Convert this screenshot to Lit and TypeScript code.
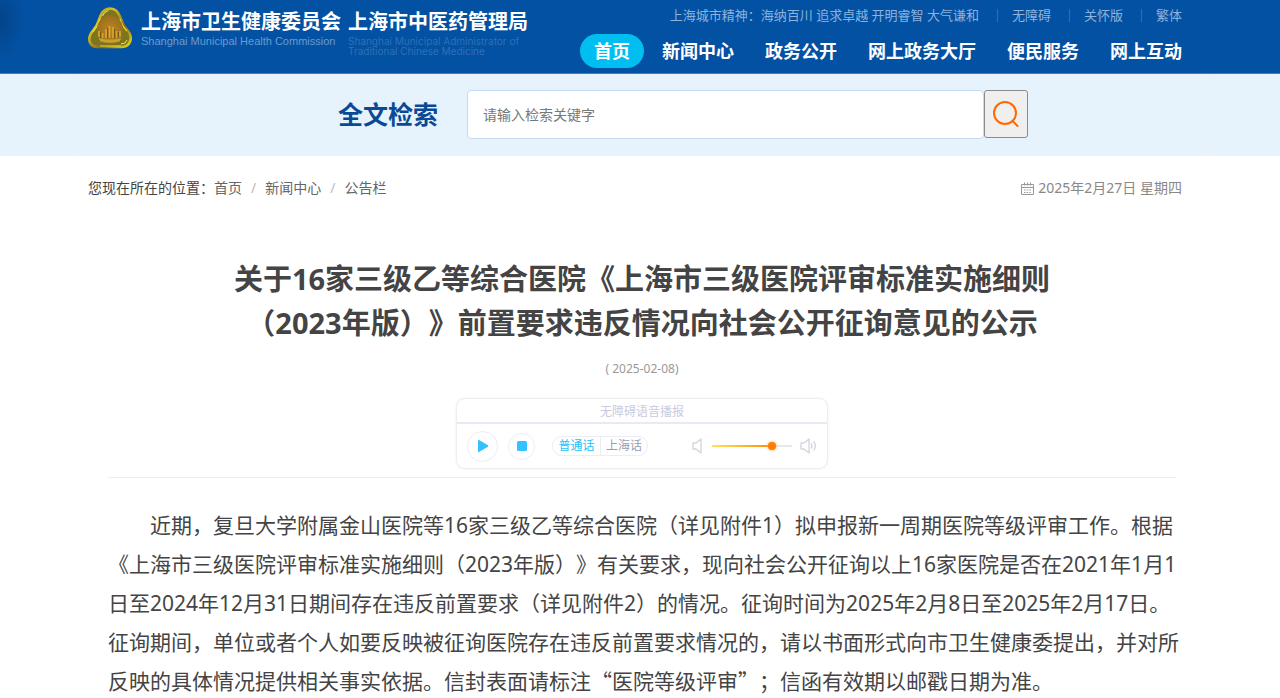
import { LitElement, html, css, svg } from "lit";
import { customElement, state } from "lit/decorators.js";

const NAV = ["首页", "新闻中心", "政务公开", "网上政务大厅", "便民服务", "网上互动"];
const TOOLS = ["无障碍", "关怀版", "繁体"];
const CRUMBS = ["首页", "新闻中心", "公告栏"];
const LINES = [
  "近期，复旦大学附属金山医院等16家三级乙等综合医院（详见附件1）拟申报新一周期医院等级评审工作。根据",
  "《上海市三级医院评审标准实施细则（2023年版）》有关要求，现向社会公开征询以上16家医院是否在2021年1月1",
  "日至2024年12月31日期间存在违反前置要求（详见附件2）的情况。征询时间为2025年2月8日至2025年2月17日。",
  "征询期间，单位或者个人如要反映被征询医院存在违反前置要求情况的，请以书面形式向市卫生健康委提出，并对所",
];

const emblem = svg`
  <svg class="emblem" viewBox="0 0 44 42" aria-hidden="true">
    <defs>
      <linearGradient id="rim" x1="0" y1="0" x2="1" y2="1">
        <stop offset="0" stop-color="#a8781c" /><stop offset=".3" stop-color="#d9c522" />
        <stop offset=".65" stop-color="#8f6a1a" /><stop offset="1" stop-color="#e6de1c" />
      </linearGradient>
      <radialGradient id="core"><stop offset="0" stop-color="#bd8420" /><stop offset="1" stop-color="#99701f" /></radialGradient>
    </defs>
    <path d="M22 1.500C26 1.500 29 3.500 31 7.500L34 14Q35 18 38.500 22C43 27 44 32 41 36.500C39 39.500 36 40 33 40H10C6 40 3 38.500 1.800 35C.500 31 2 27 5 23.500Q9 19 10.500 14L13 7.500C15 3.500 18 1.500 22 1.500Z" fill="#7d7420" stroke="url(#rim)" stroke-width="2.600" />
    <path d="M12 12Q10 19 5 25M32 12q2 7 7 12M12 39h21" stroke="#e5dd22" stroke-width="1.200" fill="none" />
    <ellipse cx="22" cy="22.500" rx="13" ry="14" fill="url(#core)" />
    <path d="M11 24v6M14.500 26v5M18 22v9M21.500 19v12M25 20v11M28.500 24v7M32 24v6" stroke="#d8ab2c" stroke-width="1.600" />
    <path d="M12.700 25v6M19.700 21v10M26.700 22v9M30.300 25v5" stroke="#74501a" stroke-width="1" />
    <path d="M10.500 31q11.500 3 23 0l-2 3.500q-9.500 2.500-19 0Z" fill="#c9a126" />
    <path d="M14.500 9q2-5 6-5.500M33 37q5 0 6-4" stroke="#efe84a" stroke-width="1" fill="none" />
  </svg>`;

@customElement("app-root")
export class AppRoot extends LitElement {
  @state() private dialect = "普通话";

  static styles = css`
    :host { display: block; min-height: 100vh; overflow: hidden; background: #fff; color: #444;
      font-family: "Noto Sans", "Noto Sans CJK SC", sans-serif; text-spacing-trim: space-all; }
    * { box-sizing: border-box; }
    a { color: inherit; text-decoration: none; }
    button { font: inherit; padding: 0; cursor: pointer; }
    .wrap { padding: 0 98px 0 88px; }
    header { background: radial-gradient(ellipse 24px 40px at 0 20px, #034488, #0351a3); border-bottom: 1px solid #3d7dbd; color: #fff; }
    .top { display: flex; justify-content: space-between; height: 73px; }
    .brand { display: flex; padding-top: 7px; }
    .emblem { width: 44px; height: 42px; }
    .org { margin-left: 9px; white-space: nowrap; padding-top: 1px; }
    .org b { display: block; font-size: 20px; line-height: 26px; font-weight: 700; font-family: "Noto Sans CJK SC", sans-serif; }
    .org small { display: block; font: 11px/14px "Liberation Sans", sans-serif; color: #6b9bcc; }
    .org + .org { margin-left: 7px; }
    .org .dim { font: 10px/10px "Inter", sans-serif; color: #2f70b4; padding-top: 2px; }
    .right { display: flex; flex-direction: column; align-items: flex-end; }
    .tools { display: flex; align-items: center; height: 20px; margin-top: 5px; font-size: 13px; line-height: 20px; color: #8cb3dc; white-space: nowrap; }
    .tools a { margin-left: 18px; padding-left: 14px; border-left: 1px solid #2f70b4; line-height: 13px; }
    nav { display: flex; align-items: center; gap: 31px; margin-top: 9px; font-size: 18px; font-weight: 700; line-height: 34px; white-space: nowrap; }
    nav .on { background: #00bff0; border-radius: 17px; padding: 0 14px; margin-right: -13px; }
    .search { background: #e6f3fd; border-bottom: 1px solid #eef3f7; padding: 0 69px 0 73px; }
    .bar { display: flex; height: 81px; padding: 15px 0 0 264px; border: 1px solid #ebf1f5; border-width: 1px 1px 0; border-radius: 4px; }
    .search label { font-size: 25px; font-weight: 700; line-height: 49px; color: #0a4a94; width: 129px; }
    .search input { width: 517px; height: 49px; border: 1px solid #c4dbf3; border-radius: 4px; padding: 0 15px; font: inherit; font-size: 14px; background: #fff; }
    .search input::placeholder { color: #777; }
    .search button { width: 44px; height: 48px; border: 1px solid #8a8a8a; border-radius: 3px; background: #efefef; display: grid; place-items: center; }
    .crumbs { display: flex; justify-content: space-between; padding-top: 22px; font-size: 14px; line-height: 20px; color: #666; }
    .crumbs .here { color: #444; }
    .crumbs i { color: #bbb; font-style: normal; margin: 0 9px; }
    .date { display: flex; align-items: center; gap: 4px; color: #888; }
    article { padding: 0 104px 0 108px; }
    h1 { margin: 59px 0 0; font-size: 29px; line-height: 44px; text-align: center; color: #444; white-space: nowrap; }
    .pub { margin: 14px 0 0; text-align: center; font-size: 12px; line-height: 20px; color: #999; }
    .player { width: 370px; margin: 20px auto 0; border-radius: 8px; box-shadow: 0 0 3px #cfcfd6; }
    .caption { font-size: 12px; line-height: 25px; height: 25px; text-align: center; color: #c9cbe0; border-bottom: 2px solid #e8e9f3; }
    .controls { display: flex; align-items: center; height: 44px; padding: 0 10px; }
    .round { border: 1px solid #ececf5; border-radius: 50%; background: #fff; display: grid; place-items: center; width: 31px; height: 31px; }
    .round.stop { width: 27px; height: 27px; margin-left: 10px; }
    .dialects { display: flex; border: 1px solid #ececf5; border-radius: 10px; margin-left: 17px; height: 20px; }
    .dialects button { border: 0; background: none; color: #9a9db0; font-size: 12px; line-height: 18px; width: 47px; }
    .dialects button + button { border-left: 1px solid #ececf5; }
    .dialects .on { color: #1fc1f7; }
    .low { margin-left: auto; }
    .volume { appearance: none; width: 80px; height: 12px; margin: 0 8px 0 10px; background: linear-gradient(90deg, #ffe25a, #ff8a0a 76%, #e6e7f0 76%) center / 100% 2px no-repeat; }
    .volume::-webkit-slider-thumb { appearance: none; width: 8px; height: 8px; border-radius: 50%; background: #ff7e00; box-shadow: 0 0 3px #ff9e3d; }
    .text { margin: 9px 0 0; padding-top: 28px; border-top: 1px solid #ececec; font-size: 21px; line-height: 39px; white-space: nowrap; text-indent: 2em; color: #444; }
    .quote { font-family: "Noto Sans CJK SC", sans-serif; line-height: 1; }
  `;

  render() {
    return html`
      <header>
        <div class="wrap top">
          <div class="brand">
            ${emblem}
            <div class="org"><b>上海市卫生健康委员会</b><small>Shanghai Municipal Health Commission</small></div>
            <div class="org"><b>上海市中医药管理局</b><small class="dim">Shanghai Municipal Administrator of<br />Traditional Chinese Medicine</small></div>
          </div>
          <div class="right">
            <div class="tools"><span>上海城市精神：海纳百川 追求卓越 开明睿智 大气谦和</span>${TOOLS.map((t) => html`<a href="#">${t}</a>`)}</div>
            <nav>${NAV.map((n, i) => html`<a href="#" class=${i ? "" : "on"}>${n}</a>`)}</nav>
          </div>
        </div>
      </header>
      <form class="search" @submit=${(e: Event) => e.preventDefault()}>
        <div class="bar">
          <label for="q">全文检索</label>
          <input id="q" placeholder="请输入检索关键字" />
          <button aria-label="搜索">
            <svg width="28" height="28" viewBox="0 0 28 28" fill="none" stroke="#ff6a00" stroke-width="2"><circle cx="13" cy="13" r="11" /><path d="m20.500 21 5 5" stroke-linecap="round" /></svg>
          </button>
        </div>
      </form>
      <div class="wrap crumbs">
        <div><span class="here">您现在所在的位置：</span>${CRUMBS.map((c, i) => html`${i ? html`<i>/</i>` : ""}<a href="#">${c}</a>`)}</div>
        <div class="date">
          <svg width="13" height="13" viewBox="0 0 13 13" fill="none" stroke="#999"><path d="M.5 2.500h12v10H.5zM.5 5.500h12M3.500.500v3M9.500.500v3M6.500.500v3" /><path d="M3 8h7M3 10.500h7" stroke-dasharray="1.500 1.200" /></svg>
          2025年2月27日 星期四
        </div>
      </div>
      <article>
        <h1>关于16家三级乙等综合医院《上海市三级医院评审标准实施细则<br />（2023年版）》前置要求违反情况向社会公开征询意见的公示</h1>
        <p class="pub">( 2025-02-08)</p>
        <div class="player">
          <div class="caption">无障碍语音播报</div>
          <div class="controls">
            <button class="round" aria-label="播放"><svg width="12" height="14" viewBox="0 0 12 14"><path d="M1 1.500v11q0 1 1 .500l9-5.200q.800-.800 0-1.600L2 1q-1-.500-1 .500Z" fill="#33c1ff" /></svg></button>
            <button class="round stop" aria-label="停止"><svg width="10" height="10" viewBox="0 0 10 10"><rect width="10" height="10" rx="1.500" fill="#33c1ff" /></svg></button>
            <div class="dialects">
              ${["普通话", "上海话"].map((d) => html`<button class=${d === this.dialect ? "on" : ""} @click=${() => (this.dialect = d)}>${d}</button>`)}
            </div>
            <svg class="low" width="10" height="16" viewBox="0 0 10 16" fill="none" stroke="#d3d4dc" stroke-width="1.300"><path d="M1 5h3l5-4v14l-5-4H1Z" stroke-linejoin="round" /></svg>
            <input class="volume" type="range" min="0" max="100" value="78" aria-label="音量" />
            <svg width="17" height="16" viewBox="0 0 17 16" fill="none" stroke="#d3d4dc" stroke-width="1.300"><path d="M1 5h3l5-4v14l-5-4H1Z" stroke-linejoin="round" /><path d="M11 5.500q2 2.500 0 5M13.500 3.500q4 4.500 0 9" /></svg>
          </div>
        </div>
        <p class="text">${LINES.map((l) => html`${l}<br />`)}反映的具体情况提供相关事实依据。信封表面请标注<span class="quote">“医院等级评审”</span>；信函有效期以邮戳日期为准。</p>
      </article>
    `;
  }
}
